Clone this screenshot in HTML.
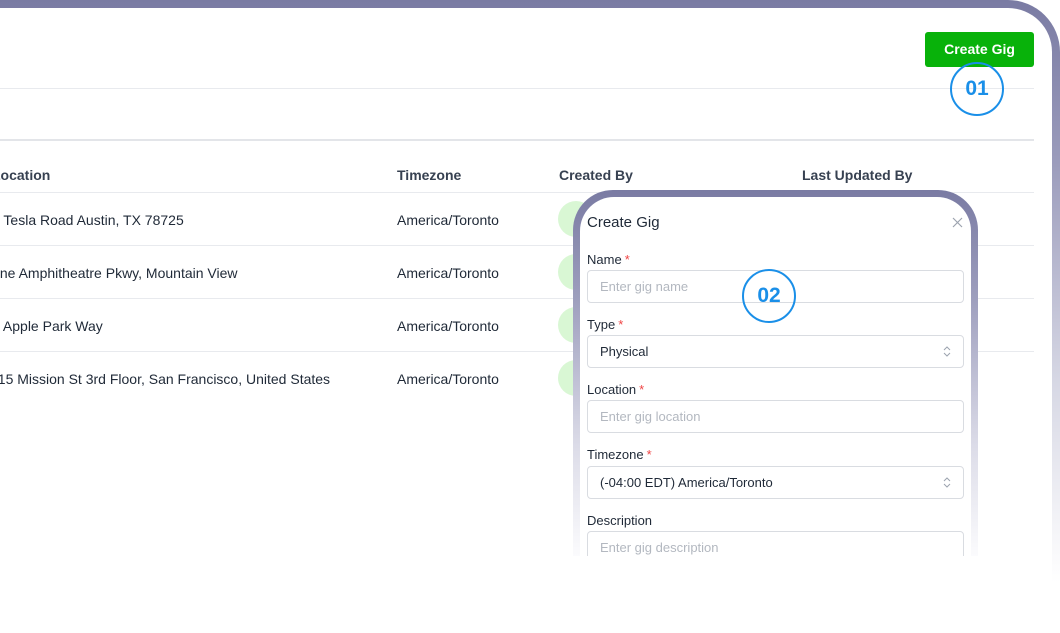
<!DOCTYPE html>
<html><head><meta charset="utf-8"><style>
*{box-sizing:border-box;margin:0;padding:0}
html,body{width:1060px;height:633px;overflow:hidden}
body{background:#fff;position:relative;font-family:"Liberation Sans",Helvetica,Arial,sans-serif;color:#1f2937}
.abs{position:absolute}
.frame{left:-80px;top:0;width:1140px;height:633px;border-radius:52px 52px 0 0;background:linear-gradient(to bottom,#7a7ba3 0%,#9a9bbb 25%,#d6d7e4 60%,#fff 92%)}
.frame .in{position:absolute;left:8px;top:8px;right:8px;bottom:0;border-radius:44px 44px 0 0;background:#fff}
.line{left:0;width:1034px;height:1px;background:#e8eaee}
.th{font-size:14px;font-weight:bold;color:#374151;top:167px}
.td{font-size:14px;color:#1f2937}
.av{width:36px;height:36px;border-radius:50%;background:#d9f7d4;left:558px}
.btn{left:925px;top:32px;width:109px;height:35px;background:#08b20a;border-radius:3px;color:#fff;font-weight:bold;font-size:14px;text-align:center;line-height:35px}
.circ{width:54px;height:54px;border-radius:50%;border:2px solid #1a8fe8;color:#1a8fe8;font-weight:bold;font-size:21px;text-align:center;line-height:50px;background:transparent}
.modal{left:573px;top:190px;width:405px;height:366px;border-radius:40px 40px 0 0;background:linear-gradient(to bottom,#7a7ba3 0%,#9e9fbe 30%,#dcdce8 70%,#fbfbfd 100%)}
.modal .in{position:absolute;left:7px;top:7px;right:7px;bottom:0;border-radius:34px 34px 0 0;background:#fff;overflow:hidden}
.lbl{font-size:13px;color:#1f2937;left:587px}
.lbl b{color:#ef4444;font-weight:normal;margin-left:3px}
.inp{left:587px;width:377px;height:33px;border:1px solid #d9dce1;border-radius:4px;font-size:13px;line-height:31px;padding-left:12px;color:#b3b8c0}
.inp.v{color:#1f2937}
.arr{position:absolute;right:12px;top:9px;width:8px;height:13px}
</style></head><body>
<div class="abs frame"><div class="in"></div></div>
<div class="abs line" style="top:88px"></div>
<div class="abs line" style="top:139px;height:2px;background:#e3e5e9"></div>
<div class="abs th" style="left:-8px">Location</div>
<div class="abs th" style="left:397px">Timezone</div>
<div class="abs th" style="left:559px">Created By</div>
<div class="abs th" style="left:802px">Last Updated By</div>
<div class="abs line" style="top:192px"></div>
<div class="abs line" style="top:245px"></div>
<div class="abs line" style="top:298px"></div>
<div class="abs line" style="top:351px"></div>
<div class="abs td" style="left:-8px;top:212px">1 Tesla Road Austin, TX 78725</div>
<div class="abs td" style="left:-11px;top:265px">One Amphitheatre Pkwy, Mountain View</div>
<div class="abs td" style="left:-8px;top:318px">1 Apple Park Way</div>
<div class="abs td" style="left:-10px;top:371px">415 Mission St 3rd Floor, San Francisco, United States</div>
<div class="abs td" style="left:397px;top:212px">America/Toronto</div>
<div class="abs td" style="left:397px;top:265px">America/Toronto</div>
<div class="abs td" style="left:397px;top:318px">America/Toronto</div>
<div class="abs td" style="left:397px;top:371px">America/Toronto</div>
<div class="abs av" style="top:201px"></div>
<div class="abs av" style="top:254px"></div>
<div class="abs av" style="top:307px"></div>
<div class="abs av" style="top:360px"></div>
<div class="abs btn">Create Gig</div>
<div class="abs circ" style="left:950px;top:62px">01</div>
<div class="abs modal"><div class="in"></div></div>
<div class="abs" style="left:587px;top:214px;font-size:15px;color:#1f2937">Create Gig</div>
<svg class="abs" style="left:952px;top:217px" width="11" height="11" viewBox="0 0 11 11"><path d="M1 1L10 10M10 1L1 10" stroke="#9ca3af" stroke-width="1.2"/></svg>
<div class="abs lbl" style="top:252px">Name<b>*</b></div>
<div class="abs inp" style="top:270px">Enter gig name</div>
<div class="abs lbl" style="top:317px">Type<b>*</b></div>
<div class="abs inp v" style="top:335px">Physical<svg class="arr" viewBox="0 0 8 13"><path d="M1 5L4 2L7 5M1 8L4 11L7 8" fill="none" stroke="#9ca3af" stroke-width="1"/></svg></div>
<div class="abs lbl" style="top:382px">Location<b>*</b></div>
<div class="abs inp" style="top:400px">Enter gig location</div>
<div class="abs lbl" style="top:447px">Timezone<b>*</b></div>
<div class="abs inp v" style="top:466px">(-04:00 EDT) America/Toronto<svg class="arr" viewBox="0 0 8 13"><path d="M1 5L4 2L7 5M1 8L4 11L7 8" fill="none" stroke="#9ca3af" stroke-width="1"/></svg></div>
<div class="abs lbl" style="top:513px">Description</div>
<div class="abs" style="left:580px;top:531px;width:391px;height:25px;overflow:hidden">
<div class="abs inp" style="left:7px;top:0;height:40px">Enter gig description</div></div>
<div class="abs circ" style="left:742px;top:269px">02</div>
</body></html>
